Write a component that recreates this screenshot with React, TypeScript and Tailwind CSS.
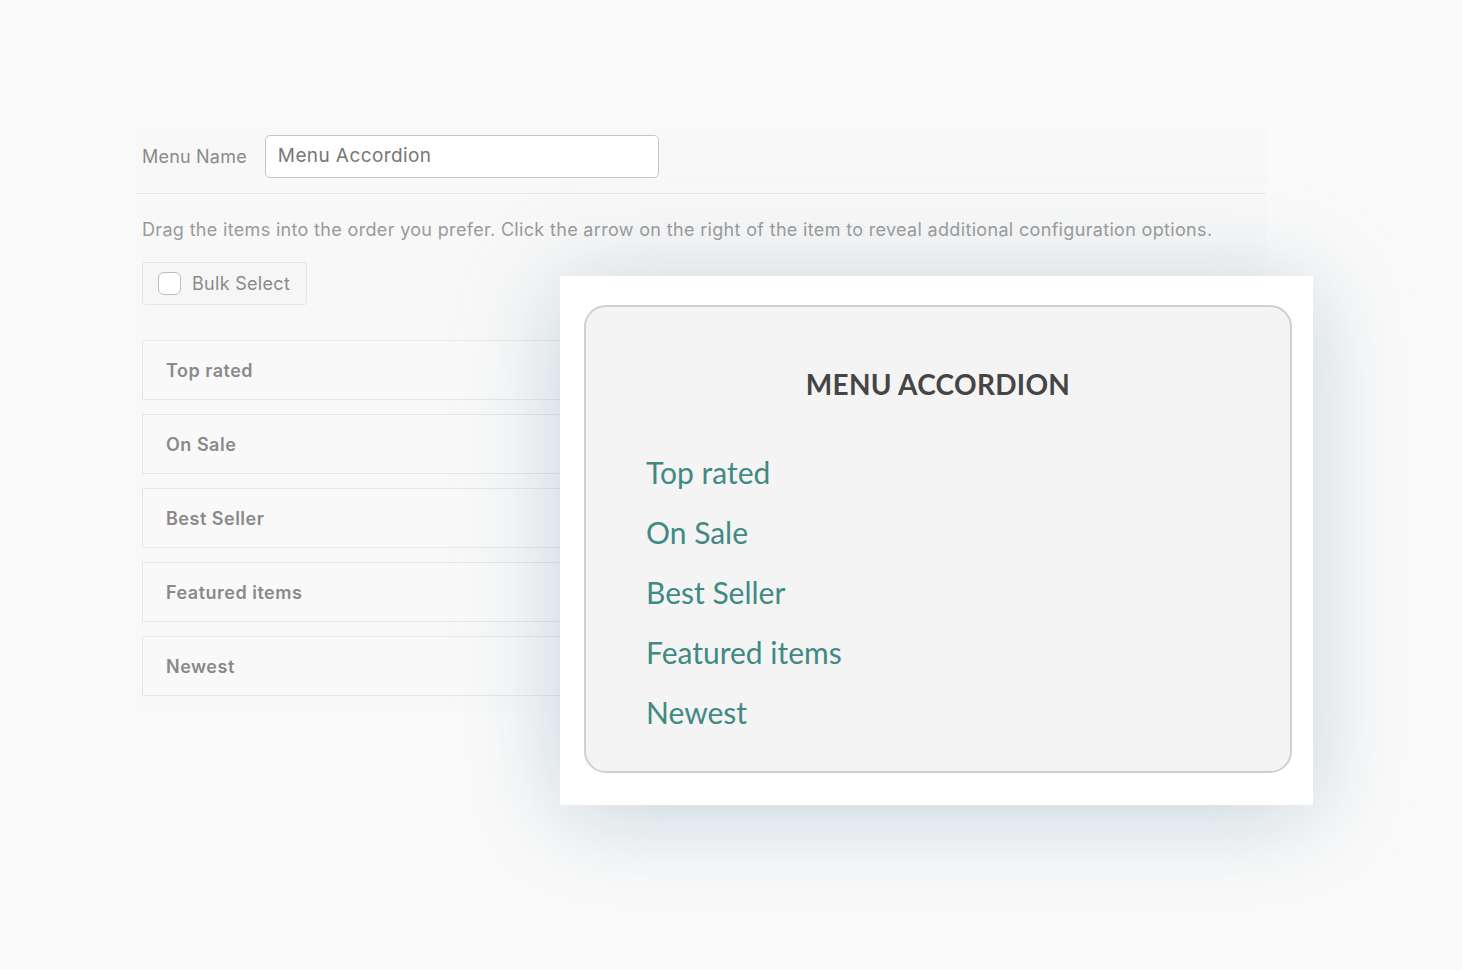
const items = ["Top rated", "On Sale", "Best Seller", "Featured items", "Newest"];

export default function App() {
  return (
    <div className="relative min-h-[970px] w-full overflow-hidden bg-[#fafafa] font-['Inter',sans-serif]">
      <div className="ml-[136px] mt-[128px] w-[1130px] bg-[#f8f8f8] px-[6px] pb-[15px]">
        <div className="-mx-[6px] flex items-center gap-[18px] border-b border-[#e8e8e8] px-[6px] pt-[7px] pb-[15px]">
          <span className="text-[18px] tracking-[0.2px] text-[#8a8a8a]">Menu Name</span>
          <div className="flex h-[43px] w-[394px] items-center rounded-[5px] border border-[#c6c6c6] bg-white px-[12px] text-[19px] tracking-[0.4px] text-[#777]">
            Menu Accordion
          </div>
        </div>

        <p className="mt-[24px] text-[18px] leading-[24px] tracking-[0.33px] text-[#9a9a9a]">
          Drag the items into the order you prefer. Click the arrow on the right of the item to reveal additional
          configuration options.
        </p>

        <div className="mt-[20px] flex h-[43px] w-[165px] items-center gap-[11px] rounded-[3px] border border-[#e6e6e6] bg-[#f6f6f6] px-[15px]">
          <span className="h-[23px] w-[23px] shrink-0 rounded-[6px] border border-[#bdbdbd] bg-white" />
          <span className="whitespace-nowrap text-[18px] tracking-[0.3px] text-[#8a8a8a]">Bulk Select</span>
        </div>

        <div className="mt-[35px] flex flex-col gap-[14px]">
          {items.map((t) => (
            <div
              key={t}
              className="flex h-[60px] items-center border border-[#e6e6e6] bg-[#f9f9f9] px-[23px] text-[18px] font-semibold tracking-[0.5px] text-[#8a8a8a]"
            >
              {t}
            </div>
          ))}
        </div>
      </div>

      <div className="absolute left-[560px] top-[276px] h-[529px] w-[753px] bg-white pl-[24px] pr-[21px] pt-[29px] shadow-[0_10px_90px_rgba(135,165,182,0.45)]">
        <div className="h-[468px] rounded-[22px] border-2 border-[#d0d0d0] bg-[#f4f4f4] font-['Lato',sans-serif]">
          <h2 className="mt-[56px] text-center text-[28px] font-bold tracking-[0.3px] text-[#454545]">MENU ACCORDION</h2>
          <ul className="mt-[37px] flex flex-col pl-[60px]">
            {items.map((t) => (
              <li key={t} className="h-[60px] text-[30px] leading-[60px] text-[#418a83]">
                {t}
              </li>
            ))}
          </ul>
        </div>
      </div>
    </div>
  );
}
